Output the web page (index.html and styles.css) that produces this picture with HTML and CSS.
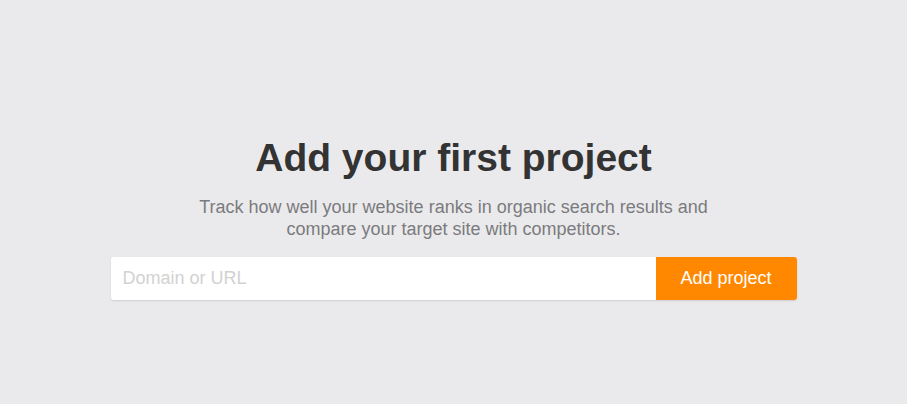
FILE: index.html
```html
<!DOCTYPE html>
<html>
<head>
<meta charset="utf-8">
<link rel="stylesheet" href="styles.css">
</head>
<body>
<main class="page">
  <section class="empty">
    <h1 class="title">Add your first project</h1>
    <p class="lead">Track how well your website ranks in organic search results and<br>compare your target site with competitors.</p>
    <form class="add-form">
      <input class="domain" type="text" placeholder="Domain or URL">
      <button class="add-btn" type="button">Add project</button>
    </form>
  </section>
</main>
</body>
</html>
```
FILE: styles.css
```css
html, body {
  margin: 0;
  padding: 0;
}
body {
  background: #eaeaec;
  font-family: "Liberation Sans", Arial, sans-serif;
  width: 907px;
  height: 404px;
  overflow: hidden;
}
.page {
  display: flex;
  justify-content: center;
  padding-top: 134px;
}
.empty {
  display: flex;
  flex-direction: column;
  align-items: center;
}
.title {
  margin: 0;
  font-size: 39px;
  font-weight: 700;
  line-height: 48px;
  color: #333333;
}
.lead {
  margin: 14px 0 0;
  font-size: 18px;
  line-height: 22px;
  color: #7b7b7e;
  text-align: center;
}
.add-form {
  display: flex;
  margin-top: 17px;
  width: 686px;
  height: 43px;
  box-shadow: 0 1px 2px rgba(0,0,0,0.12);
  border-radius: 3px;
}
.domain {
  flex: 1;
  border: 0;
  margin: 0;
  padding: 0 12px;
  font-family: "Liberation Sans", Arial, sans-serif;
  font-size: 18px;
  color: #333;
  background: #fff;
  border-radius: 3px 0 0 3px;
  outline: none;
}
.domain::placeholder {
  color: #d2d2d2;
}
.add-btn {
  width: 141px;
  border: 0;
  margin: 0;
  padding: 0;
  background: #ff8800;
  color: #fff;
  font-family: "Liberation Sans", Arial, sans-serif;
  font-size: 18px;
  border-radius: 0 3px 3px 0;
  cursor: pointer;
}
```
